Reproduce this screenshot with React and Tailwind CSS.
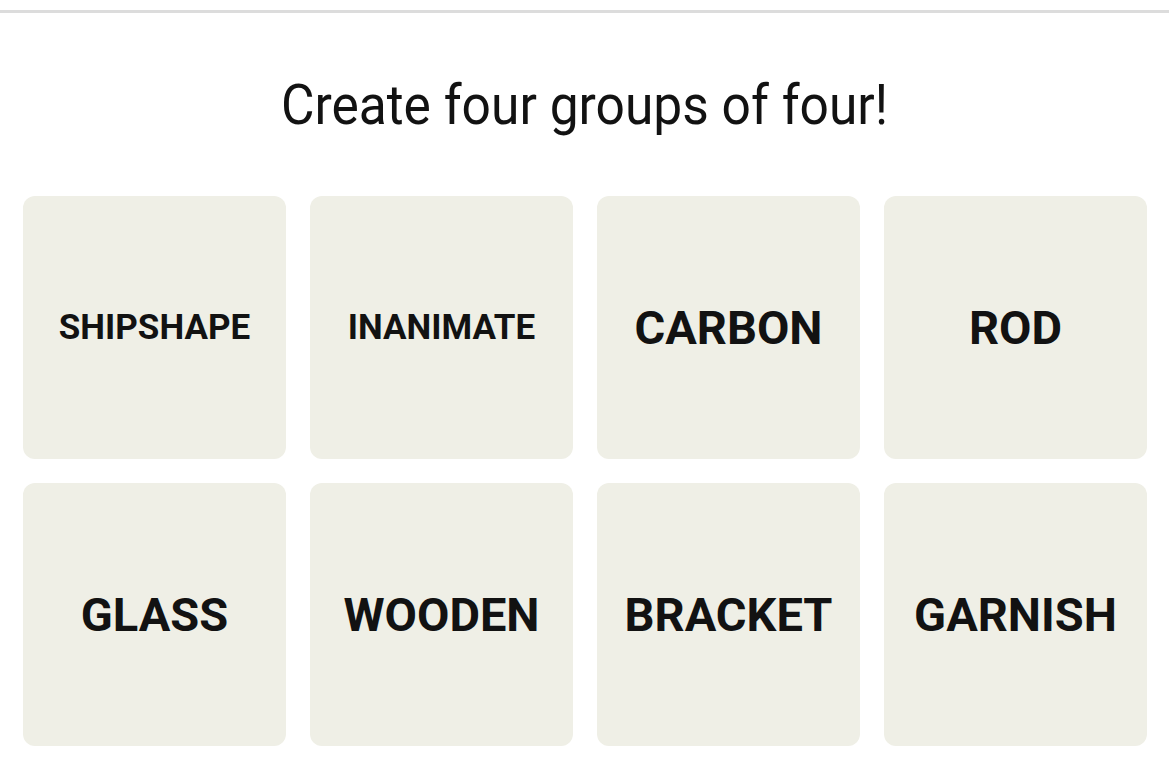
import React from "react";

const words = [
  { w: "SHIPSHAPE", s: "text-[35px]" },
  { w: "INANIMATE", s: "text-[35px]" },
  { w: "CARBON", s: "text-[47px]" },
  { w: "ROD", s: "text-[47px]" },
  { w: "GLASS", s: "text-[47px]" },
  { w: "WOODEN", s: "text-[47px]" },
  { w: "BRACKET", s: "text-[47px]" },
  { w: "GARNISH", s: "text-[47px]" },
];

export default function App() {
  return (
    <div className="w-[1169px] h-[769px] bg-white overflow-hidden" style={{ fontFamily: "Roboto, 'Liberation Sans', sans-serif" }}>
      <div className="h-[13px] border-b-[3px] border-[#dcdcdc]" />
      <h1 className="mt-[64px] text-center text-[56px] leading-none font-normal text-[#121212] scale-x-[0.92]">
        Create four groups of four!
      </h1>
      <div className="mt-[63px] pl-[23px] pr-[22px] grid grid-cols-4 gap-[24px]">
        {words.map((x) => (
          <div key={x.w} className="h-[263px] rounded-[12px] bg-[#efefe6] flex items-center justify-center">
            <span className={`${x.s} font-bold leading-none text-[#121212]`}>{x.w}</span>
          </div>
        ))}
      </div>
    </div>
  );
}
